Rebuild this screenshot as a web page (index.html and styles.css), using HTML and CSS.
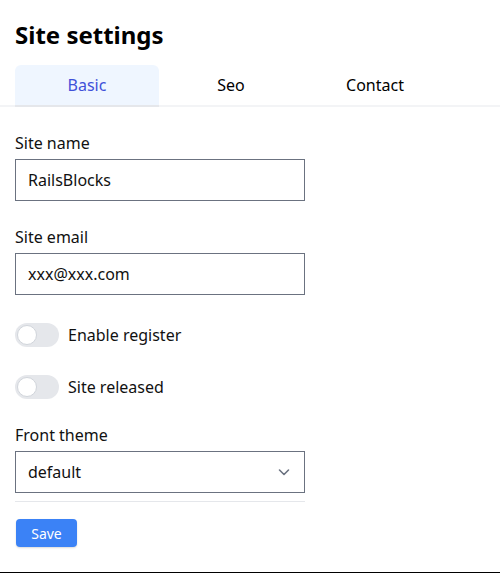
FILE: index.html
```html
<!DOCTYPE html>
<html>
<head>
<meta charset="utf-8">
<link rel="stylesheet" href="styles.css">
</head>
<body>
<div class="page">
  <h1 class="title">Site settings</h1>
  <nav class="tabs">
    <div class="tab active">Basic</div>
    <div class="tab">Seo</div>
    <div class="tab">Contact</div>
  </nav>
  <form class="form">
    <div class="field">
      <label class="label">Site name</label>
      <div class="input">RailsBlocks</div>
    </div>
    <div class="field">
      <label class="label">Site email</label>
      <div class="input">xxx@xxx.com</div>
    </div>
    <div class="toggle-row">
      <span class="switch"><span class="knob"></span></span>
      <span class="toggle-label">Enable register</span>
    </div>
    <div class="toggle-row">
      <span class="switch"><span class="knob"></span></span>
      <span class="toggle-label">Site released</span>
    </div>
    <div class="field">
      <label class="label">Front theme</label>
      <div class="input select">
        <span>default</span>
        <svg class="chev" width="14" height="14" viewBox="0 0 14 14"><path d="M2.5 5 L7 9.5 L11.5 5" fill="none" stroke="#6b7280" stroke-width="1.6" stroke-linecap="round" stroke-linejoin="round"/></svg>
      </div>
    </div>
    <div class="divider"></div>
    <div class="actions"><button type="button" class="btn">Save</button></div>
  </form>
</div>
</body>
</html>
```
FILE: styles.css
```css
* { box-sizing: border-box; }
html, body { margin: 0; padding: 0; background: #fff; }
body { font-family: "Noto Sans", "Open Sans", sans-serif; color: #111; }
.page {
  height: 573px;
  border-bottom: 1px solid #000;
  padding-top: 19px;
}
.title {
  margin: 0 0 14px 15px;
  font-size: 24px;
  line-height: 32px;
  font-weight: 700;
  color: #000;
}
.tabs {
  display: flex;
  padding: 0 15px;
  border-bottom: 2px solid #f3f4f6;
}
.tab {
  width: 144px;
  height: 40px;
  display: flex;
  align-items: center;
  justify-content: center;
  font-size: 16px;
  color: #000;
}
.tab.active {
  background: #eff6ff;
  color: #3f51d9;
  border-radius: 6px 6px 0 0;
  box-shadow: 0 2px 0 #e5e7eb;
}
.form {
  padding: 24px 15px 0;
  display: flex;
  flex-direction: column;
}
.field { display: flex; flex-direction: column; }
.field + .field { margin-top: 24px; }
.label { font-size: 16px; line-height: 24px; margin-bottom: 4px; color: #111; }
.input {
  width: 290px;
  height: 42px;
  border: 1px solid #6b7280;
  padding: 0 12px;
  display: flex;
  align-items: center;
  font-size: 16px;
  color: #111;
}
.select { justify-content: space-between; padding-right: 13px; }
.toggle-row {
  display: flex;
  align-items: center;
  gap: 9px;
  height: 24px;
  margin-top: 28px;
}
.toggle-row + .field { margin-top: 24px; }
.switch {
  width: 44px;
  height: 24px;
  border-radius: 12px;
  background: #e5e7eb;
  padding: 2px;
  display: flex;
}
.knob {
  width: 20px;
  height: 20px;
  border-radius: 50%;
  background: #fff;
  border: 1px solid #d1d5db;
}
.toggle-label { font-size: 16px; color: #111; }
.divider { width: 290px; height: 1px; background: #e5e7eb; margin-top: 8px; }
.actions { margin-top: 17px; }
.btn {
  width: 61px;
  height: 28px;
  margin-left: 1px;
  border: 0;
  border-radius: 4px;
  background: #3b82f6;
  color: #fff;
  font-family: inherit;
  font-size: 14px;
  box-shadow: 0 1px 2px rgba(0,0,0,0.15);
}
```
